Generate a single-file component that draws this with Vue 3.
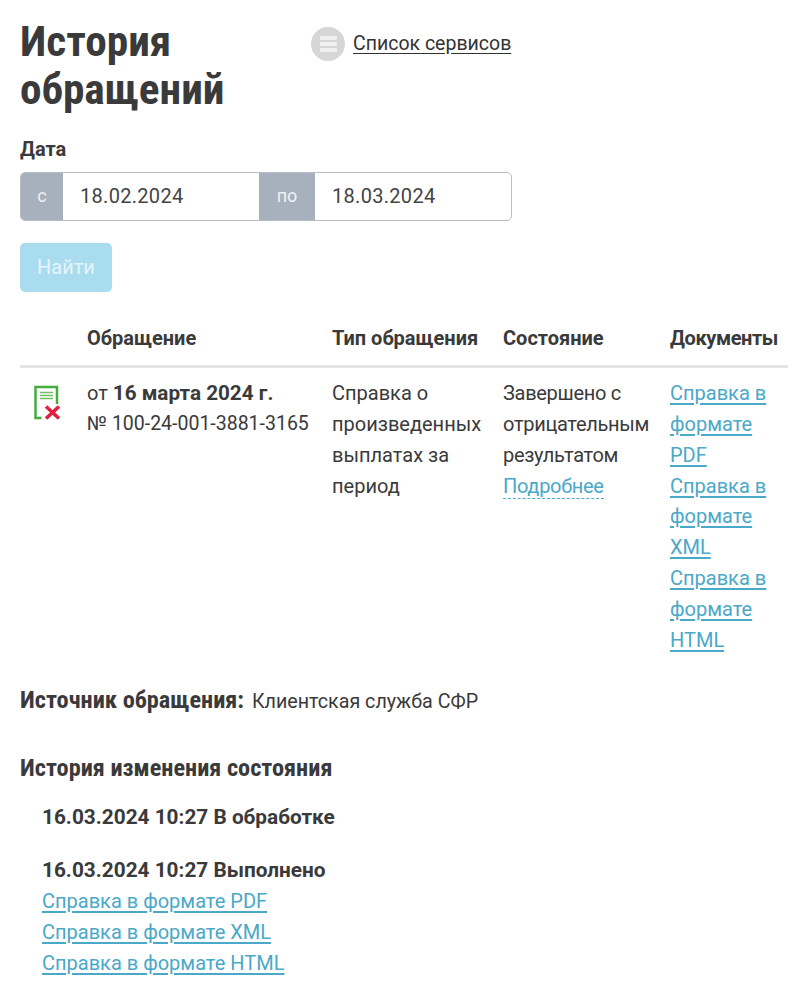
<template>
  <div class="page">
    <div class="head">
      <h1 class="title">История обращений</h1>
      <a class="services">
        <span class="services-icon"><i></i><i></i><i></i></span>
        <span class="services-text">Список сервисов</span>
      </a>
    </div>

    <div class="date-label">Дата</div>
    <div class="dates">
      <span class="addon addon-from">с</span>
      <span class="date date-from">18.02.2024</span>
      <span class="addon addon-to">по</span>
      <span class="date">18.03.2024</span>
    </div>
    <button class="find">Найти</button>

    <div class="table">
      <div class="row row-head">
        <div></div>
        <div>Обращение</div>
        <div>Тип обращения</div>
        <div>Состояние</div>
        <div class="docs-head">Документы</div>
      </div>
      <div class="row row-body">
        <div class="cell-icon">
          <svg width="28" height="36" viewBox="0 0 28 36">
            <path d="M9.5 34H3.5V3H25V20" fill="none" stroke="#45ad3f" stroke-width="2.5"/>
            <path d="M8 8.5H21M8 11.5H21M8 14.5H21" stroke="#6fbf68" stroke-width="1.4"/>
            <path d="M14 22.5L27 34.5M27 22.5L14 34.5" stroke="#e0213f" stroke-width="3.6"/>
          </svg>
        </div>
        <div>
          <div>от <b class="order-date">16 марта 2024 г.</b></div>
          <div class="number">№ 100-24-001-3881-3165</div>
        </div>
        <div>Справка о произведенных выплатах за период</div>
        <div class="state">Завершено с отрицательным результатом <a class="more">Подробнее</a></div>
        <div class="docs">
          <a v-for="d in docs" :key="d">Справка в формате {{ d }}</a>
        </div>
      </div>
    </div>

    <div class="source"><b>Источник обращения:</b> <span class="source-name">Клиентская служба СФР</span></div>

    <h2 class="history-title">История изменения состояния</h2>
    <div class="history">
      <div class="step"><b>16.03.2024 10:27 В обработке</b></div>
      <div class="step">
        <b>16.03.2024 10:27 Выполнено</b>
        <a v-for="d in docs" :key="d">Справка в формате {{ d }}</a>
      </div>
    </div>
  </div>
</template>

<script setup>
const docs = ['PDF', 'XML', 'HTML']
</script>

<style>
html, body {
  background: #fff;
}
</style>

<style scoped>
.page {
  padding: 18px 20px 0;
  font-family: Roboto, "Noto Sans", sans-serif;
  font-size: 20px;
  line-height: 30.9px;
  color: #3a3a3a;
  height: 982px;
  overflow: hidden;
}
a {
  color: #4aa8c8;
  text-decoration: underline;
  text-underline-offset: 3px;
}
b {
  font-weight: 700;
}
.head {
  display: flex;
  align-items: flex-start;
}
.title {
  margin: 0;
  width: 291px;
  font-family: "Roboto Condensed", Roboto, sans-serif;
  font-size: 43.3px;
  line-height: 48px;
  font-weight: 700;
}
.services {
  display: flex;
  align-items: center;
  gap: 8px;
  margin-top: 9px;
  color: #333;
  text-decoration: none;
}
.services-icon {
  width: 34px;
  height: 34px;
  border-radius: 50%;
  background: #d6d6d6;
  display: flex;
  flex-direction: column;
  align-items: center;
  justify-content: center;
  gap: 2px;
}
.services-icon i {
  width: 17px;
  height: 4px;
  border-radius: 1px;
  background: #f0f0f0;
}
.services-text {
  font-size: 19.5px;
  text-decoration: underline;
  text-underline-offset: 3px;
}
.date-label {
  margin-top: 20px;
  font-weight: 700;
}
.dates {
  display: flex;
  width: 492px;
  height: 49px;
  margin-top: 7px;
  border: 1px solid #b9bdc4;
  border-radius: 5px;
  box-sizing: border-box;
  overflow: hidden;
  align-items: stretch;
}
.addon {
  background: #a7b0bd;
  color: #eef1f4;
  font-size: 18px;
  display: flex;
  align-items: center;
  justify-content: center;
}
.addon-from { width: 42px; }
.addon-to { width: 56px; }
.date {
  flex: 1;
  display: flex;
  align-items: center;
  padding-left: 17px;
  letter-spacing: 0.3px;
  color: #444;
}
.date-from {
  flex: none;
  width: 179px;
}
.find {
  display: block;
  margin-top: 22px;
  width: 92px;
  height: 49px;
  border: 0;
  border-radius: 5px;
  background: #a9dcef;
  color: #e6f5fb;
  font: inherit;
}
.row {
  display: grid;
  grid-template-columns: 67px 245px 171px 167px 118px;
}
.row-head {
  margin-top: 31px;
  padding-bottom: 11px;
  border-bottom: 3px solid #e4e4e4;
  font-weight: 700;
}
.docs-head {
  letter-spacing: -0.4px;
}
.row-body {
  padding-top: 10px;
}
.cell-icon {
  padding: 6px 0 0 12px;
}
.order-date {
  font-size: 20.7px;
}
.number {
  font-size: 19.5px;
  line-height: 29px;
}
.state {
  letter-spacing: -0.3px;
}
.docs a {
  display: block;
}
.more {
  text-decoration: none;
  border-bottom: 1px dashed #4aa8c8;
}
.source {
  margin-top: 29px;
}
.source b {
  font-family: "Roboto Condensed", Roboto, sans-serif;
  font-size: 24.3px;
  margin-right: 3px;
}
.source-name {
  font-size: 19.7px;
}
.history-title {
  margin: 34px 0 0;
  font-family: "Roboto Condensed", Roboto, sans-serif;
  font-size: 24.3px;
  line-height: 31px;
  font-weight: 700;
}
.history {
  padding: 19px 0 0 22px;
}
.history b {
  font-size: 20.8px;
}
.step {
  margin-bottom: 22px;
}
.step a {
  display: block;
}
</style>
